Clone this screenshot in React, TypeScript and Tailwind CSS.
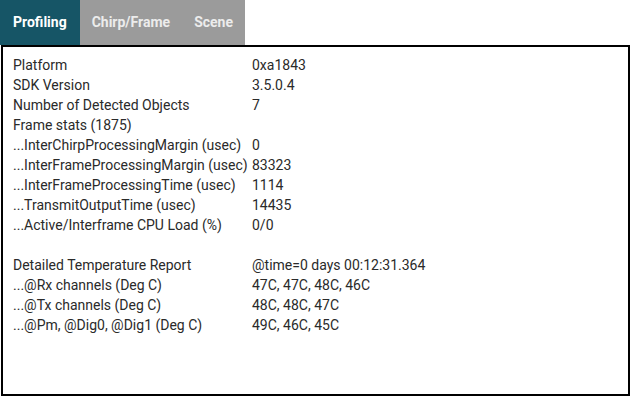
import React, { useState } from 'react';

const rows: [string, string][] = [
  ['Platform', '0xa1843'],
  ['SDK Version', '3.5.0.4'],
  ['Number of Detected Objects', '7'],
  ['Frame stats (1875)', ''],
  ['...InterChirpProcessingMargin (usec)', '0'],
  ['...InterFrameProcessingMargin (usec)', '83323'],
  ['...InterFrameProcessingTime (usec)', '1114'],
  ['...TransmitOutputTime (usec)', '14435'],
  ['...Active/Interframe CPU Load (%)', '0/0'],
  ['', ''],
  ['Detailed Temperature Report', '@time=0 days 00:12:31.364'],
  ['...@Rx channels (Deg C)', '47C, 47C, 48C, 46C'],
  ['...@Tx channels (Deg C)', '48C, 48C, 47C'],
  ['...@Pm, @Dig0, @Dig1 (Deg C)', '49C, 46C, 45C'],
];

const tabs = ['Profiling', 'Chirp/Frame', 'Scene'];

export default function App() {
  const [active, setActive] = useState(0);

  return (
    <div className="w-[631px] h-[397px] bg-white font-['Roboto',sans-serif] text-[14px] text-[#2a2a2a]">
      {/* Tabs */}
      <div className="flex h-[45px]">
        {tabs.map((t, i) => (
          <button
            key={t}
            onClick={() => setActive(i)}
            className={
              i === active
                ? 'h-full px-[13px] font-bold text-white bg-[#165566]'
                : 'h-full px-[12px] font-bold text-[#ececec] bg-[#9b9b9b]'
            }
          >
            {t}
          </button>
        ))}
      </div>

      {/* Panel */}
      <div className="ml-px w-[629px] h-[351px] border-2 border-black pt-[8px] pl-[10px]">
        <table className="border-collapse">
          <tbody>
            {rows.map(([k, v], i) => (
              <tr key={i} className="h-[20px] leading-[20px]">
                <td className="w-[239px] p-0 pr-[4px] whitespace-nowrap">{k}</td>
                <td className="p-0 whitespace-nowrap">{v}</td>
              </tr>
            ))}
          </tbody>
        </table>
      </div>
    </div>
  );
}
